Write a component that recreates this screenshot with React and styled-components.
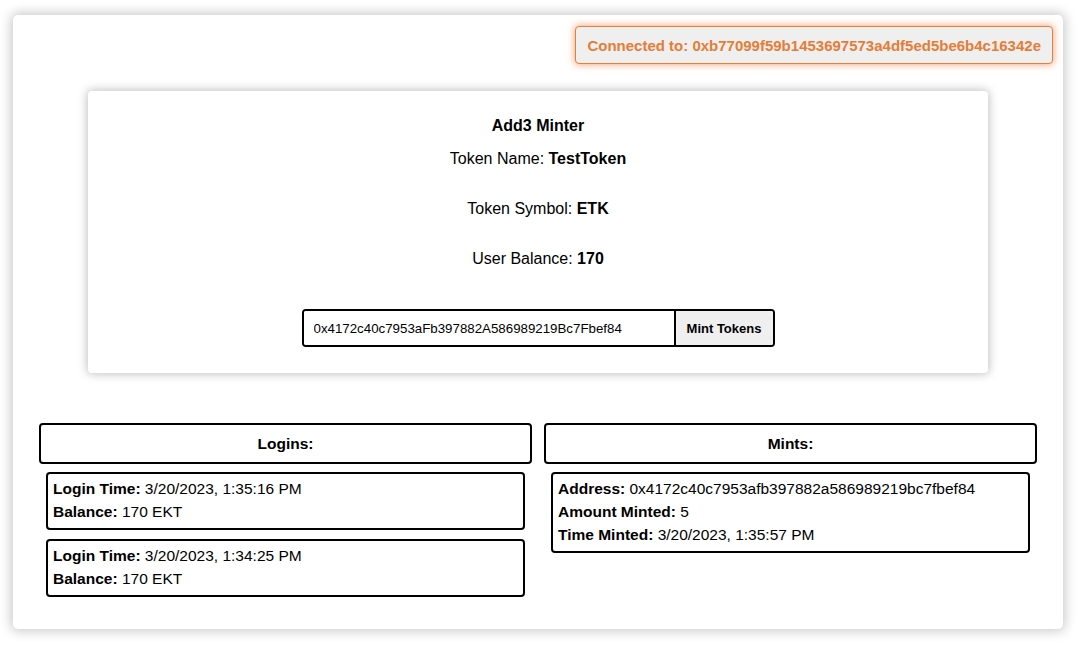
import React from "react";
import styled, { createGlobalStyle } from "styled-components";

const GlobalStyle = createGlobalStyle`
  body {
    margin: 0;
    background: #ffffff;
    font-family: "Liberation Sans", Arial, Helvetica, sans-serif;
    color: #000;
  }
`;

const Page = styled.div`
  box-sizing: border-box;
  width: 1050px;
  height: 614px;
  margin: 15px 0 16px 13px;
  padding: 11px 10px 0 26px;
  background: #fff;
  border-radius: 5px;
  box-shadow: 0 0 12px 2px rgba(0, 0, 0, 0.22);
  display: flex;
  flex-direction: column;
`;

const TopBar = styled.div`
  display: flex;
  justify-content: flex-end;
`;

const ConnectedBadge = styled.div`
  box-sizing: border-box;
  height: 38px;
  padding: 0 11px;
  display: flex;
  align-items: center;
  background: #efefef;
  border: 1px solid #e57f3a;
  border-radius: 4px;
  box-shadow: 0 0 7px 1px rgba(230, 120, 50, 0.6);
  color: #e57d36;
  font-weight: bold;
  font-size: 15px;
`;

const MinterCard = styled.div`
  box-sizing: border-box;
  width: 900px;
  height: 282px;
  margin: 27px 0 0 49px;
  padding: 26px 0 0;
  background: #fff;
  border-radius: 4px;
  box-shadow: 0 0 10px 1px rgba(0, 0, 0, 0.25);
  display: flex;
  flex-direction: column;
  align-items: center;
  font-size: 16px;
`;

const Title = styled.div`
  font-weight: bold;
  line-height: 18px;
`;

const InfoLine = styled.div`
  line-height: 18px;
  margin-top: ${(p) => p.gap}px;
`;

const MintForm = styled.div`
  display: flex;
  margin-top: 41px;
  border: 2px solid #000;
  border-radius: 4px;
  height: 38px;
  box-sizing: border-box;
  overflow: hidden;
`;

const AddressInput = styled.input`
  width: 372px;
  box-sizing: border-box;
  border: none;
  border-right: 2px solid #000;
  padding: 0 10px;
  font-family: "Liberation Sans", Arial, sans-serif;
  font-size: 13.3px;
  color: #000;
  outline: none;
`;

const MintButton = styled.button`
  width: 97px;
  border: none;
  background: #efefef;
  font-family: "Liberation Sans", Arial, sans-serif;
  font-weight: bold;
  font-size: 13px;
  color: #000;
  padding: 0;
`;

const Lists = styled.div`
  display: grid;
  grid-template-columns: 493px 493px;
  column-gap: 12px;
  margin-top: 50px;
  align-items: start;
`;

const Column = styled.div`
  display: flex;
  flex-direction: column;
`;

const ColumnHeader = styled.div`
  box-sizing: border-box;
  height: 41px;
  border: 2px solid #000;
  border-radius: 4px;
  display: flex;
  align-items: center;
  justify-content: center;
  font-weight: bold;
  font-size: 15.5px;
`;

const ItemList = styled.div`
  display: flex;
  flex-direction: column;
  gap: 9px;
  padding: 8px 7px 0;
`;

const Item = styled.div`
  border: 2px solid #000;
  border-radius: 4px;
  padding: 3px 5px 5px;
  font-size: 15.5px;
  line-height: 23px;
`;

const Row = styled.div`
  white-space: nowrap;
`;

const logins = [
  { time: "3/20/2023, 1:35:16 PM", balance: "170 EKT" },
  { time: "3/20/2023, 1:34:25 PM", balance: "170 EKT" },
];

const mints = [
  {
    address: "0x4172c40c7953afb397882a586989219bc7fbef84",
    amount: "5",
    time: "3/20/2023, 1:35:57 PM",
  },
];

export default function App() {
  return (
    <>
      <GlobalStyle />
      <Page>
        <TopBar>
          <ConnectedBadge>
            Connected to: 0xb77099f59b1453697573a4df5ed5be6b4c16342e
          </ConnectedBadge>
        </TopBar>
        <MinterCard>
          <Title>Add3 Minter</Title>
          <InfoLine gap={15}>
            Token Name: <b>TestToken</b>
          </InfoLine>
          <InfoLine gap={32}>
            Token Symbol: <b>ETK</b>
          </InfoLine>
          <InfoLine gap={32}>
            User Balance: <b>170</b>
          </InfoLine>
          <MintForm>
            <AddressInput
              defaultValue="0x4172c40c7953aFb397882A586989219Bc7Fbef84"
              readOnly
            />
            <MintButton>Mint Tokens</MintButton>
          </MintForm>
        </MinterCard>
        <Lists>
          <Column>
            <ColumnHeader>Logins:</ColumnHeader>
            <ItemList>
              {logins.map((l) => (
                <Item key={l.time}>
                  <Row>
                    <b>Login Time:</b> {l.time}
                  </Row>
                  <Row>
                    <b>Balance:</b> {l.balance}
                  </Row>
                </Item>
              ))}
            </ItemList>
          </Column>
          <Column>
            <ColumnHeader>Mints:</ColumnHeader>
            <ItemList>
              {mints.map((m) => (
                <Item key={m.time}>
                  <Row>
                    <b>Address:</b> {m.address}
                  </Row>
                  <Row>
                    <b>Amount Minted:</b> {m.amount}
                  </Row>
                  <Row>
                    <b>Time Minted:</b> {m.time}
                  </Row>
                </Item>
              ))}
            </ItemList>
          </Column>
        </Lists>
      </Page>
    </>
  );
}
